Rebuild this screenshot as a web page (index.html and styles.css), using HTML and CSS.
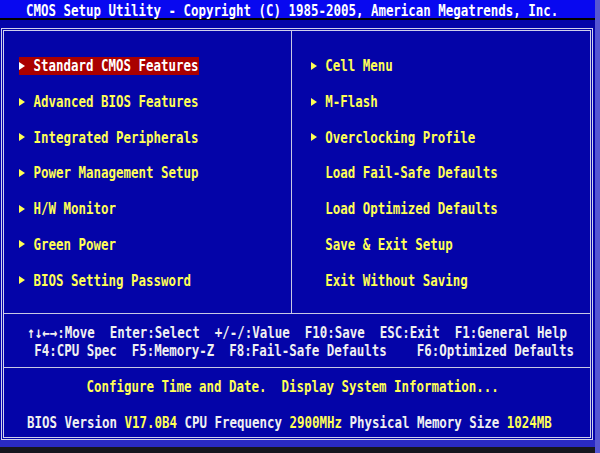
FILE: index.html
```html
<!DOCTYPE html>
<html lang="en">
<head>
    <meta charset="UTF-8">
    <meta name="viewport" content="width=device-width, initial-scale=1.0">
    <title>CMOS Setup Utility</title>
    <link rel="stylesheet" href="styles.css">
</head>
<body>
<div class="screen">
    <header class="titlebar">
        <span class="txt">CMOS Setup Utility - Copyright (C) 1985-2005, American Megatrends, Inc.</span>
    </header>
    <main class="frame">
        <section class="menus">
            <ul class="col col-left">
                <li><span class="item selected"><i class="arrow"></i><span class="txt">Standard CMOS Features</span></span></li>
                <li><span class="item"><i class="arrow"></i><span class="txt">Advanced BIOS Features</span></span></li>
                <li><span class="item"><i class="arrow"></i><span class="txt">Integrated Peripherals</span></span></li>
                <li><span class="item"><i class="arrow"></i><span class="txt">Power Management Setup</span></span></li>
                <li><span class="item"><i class="arrow"></i><span class="txt">H/W Monitor</span></span></li>
                <li><span class="item"><i class="arrow"></i><span class="txt">Green Power</span></span></li>
                <li><span class="item"><i class="arrow"></i><span class="txt">BIOS Setting Password</span></span></li>
            </ul>
            <ul class="col col-right">
                <li><span class="item"><i class="arrow"></i><span class="txt">Cell Menu</span></span></li>
                <li><span class="item"><i class="arrow"></i><span class="txt">M-Flash</span></span></li>
                <li><span class="item"><i class="arrow"></i><span class="txt">Overclocking Profile</span></span></li>
                <li><span class="item"><i class="arrow none"></i><span class="txt">Load Fail-Safe Defaults</span></span></li>
                <li><span class="item"><i class="arrow none"></i><span class="txt">Load Optimized Defaults</span></span></li>
                <li><span class="item"><i class="arrow none"></i><span class="txt">Save &amp; Exit Setup</span></span></li>
                <li><span class="item"><i class="arrow none"></i><span class="txt">Exit Without Saving</span></span></li>
            </ul>
        </section>
        <section class="help">
            <p class="line line-1">↑↓←→:Move  Enter:Select  +/-/:Value  F10:Save  ESC:Exit  F1:General Help</p>
            <p class="line line-2">F4:CPU Spec  F5:Memory-Z  F8:Fail-Safe Defaults    F6:Optimized Defaults</p>
        </section>
        <section class="status">
            <p class="line hint">Configure Time and Date.  Display System Information...</p>
            <p class="line info">BIOS Version <span class="val">V17.0B4</span> CPU Frequency <span class="val">2900MHz</span> Physical Memory Size <span class="val">1024MB</span></p>
        </section>
    </main>
    <div class="foot"></div>
    <div class="shadow"></div>
</div>
<div class="edge"></div>
</body>
</html>
```

FILE: styles.css
```css
body {
    margin: 0;
    width: 600px;
    height: 453px;
    overflow: hidden;
    display: flex;
    background-color: #0404a8;
    font-family: 'DejaVu Sans Mono', 'Liberation Mono', monospace;
    font-size: 12.46px;
    font-weight: bold;
    color: #f0f0f0;
}
.screen {
    width: 595px;
    display: flex;
    flex-direction: column;
}
.edge {
    width: 5px;
    background-color: #5656d2;
}
.txt {
    display: inline-block;
    transform: scaleY(1.28);
    white-space: pre;
}
.titlebar {
    height: 18px;
    line-height: 21px;
    padding-left: 26px;
    background-color: #0808f0;
    border-bottom: 2px solid #000;
    color: #fff;
}
.frame {
    box-sizing: border-box;
    width: 592px;
    height: 412px;
    margin: 8px 0 0 1px;
    border: 3px double #d0d0ec;
    display: flex;
    flex-direction: column;
}
.menus {
    height: 282px;
    display: flex;
    border-bottom: 1px solid #c8c8e4;
}
.col {
    list-style-type: none;
    margin: 0;
    padding: 17px 0 15px;
    display: grid;
    grid-template-rows: repeat(7, 1fr);
    align-items: center;
    color: #ffff55;
}
.col-left {
    width: 288px;
    padding-left: 15px;
    box-sizing: border-box;
    border-right: 1px solid #c8c8e4;
}
.col-right {
    flex: 1;
    padding-left: 18.7px;
}
.item {
    display: inline-flex;
    align-items: center;
    height: 18px;
    padding-right: 1px;
}
.item.selected {
    background-color: #aa0000;
    color: #fff;
}
.arrow {
    width: 0;
    height: 0;
    border-left: 6px solid currentColor;
    border-top: 4px solid transparent;
    border-bottom: 4px solid transparent;
    margin-right: 8.5px;
}
.arrow.none {
    border-left-color: transparent;
}
.help {
    height: 54px;
    padding-top: 10px;
    box-sizing: border-box;
    border-bottom: 1px solid #c8c8e4;
}
.line {
    margin: 0;
    height: 18px;
    line-height: 18px;
    white-space: pre;
    transform: scaleY(1.28);
}
.line-1 {
    padding-left: 23.3px;
}
.line-2 {
    padding-left: 30.3px;
}
.status {
    height: 68px;
    padding-top: 10px;
    box-sizing: border-box;
}
.hint {
    padding-left: 82.5px;
    color: #ffff55;
}
.info {
    margin-top: 18px;
    padding-left: 23px;
}
.val {
    color: #ffff55;
}
.foot {
    height: 7px;
    background-color: #2a2ac4;
}
.shadow {
    height: 6px;
    background-color: #16161e;
}
```
